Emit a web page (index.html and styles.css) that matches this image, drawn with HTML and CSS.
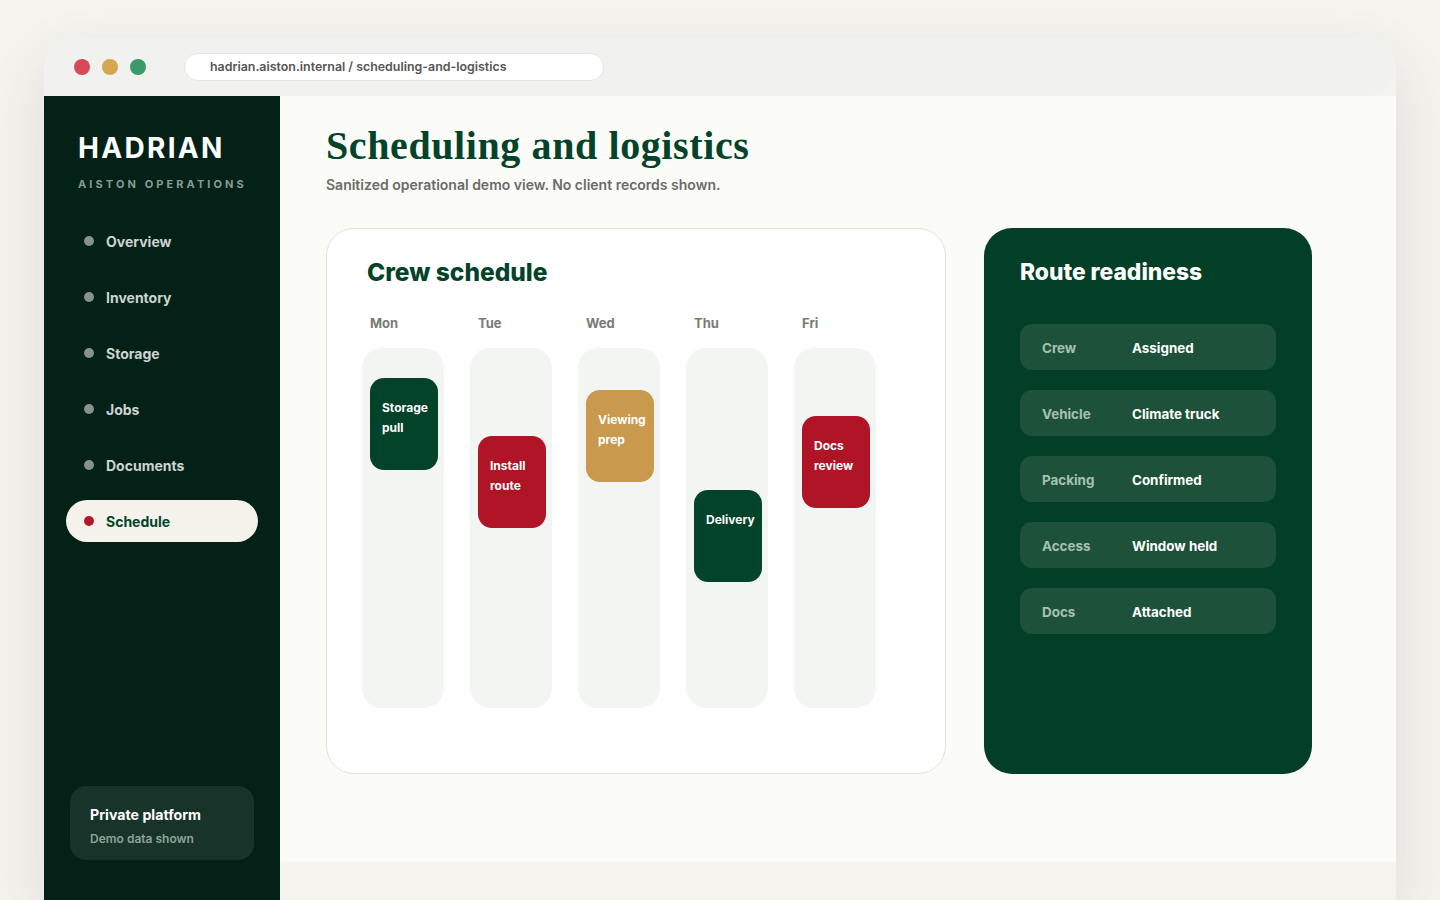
FILE: index.html
```html
<!DOCTYPE html>
<html lang="en">
<head>
  <meta charset="UTF-8">
  <meta name="viewport" content="width=device-width, initial-scale=1.0">
  <title>Hadrian - Scheduling and logistics</title>
  <link rel="stylesheet" href="styles.css">
</head>
<body>
  <div class="window">
    <div class="topbar">
      <span class="light red"></span>
      <span class="light amber"></span>
      <span class="light green"></span>
      <div class="url">hadrian.aiston.internal / scheduling-and-logistics</div>
    </div>

    <div class="frame">
      <aside class="sidebar">
        <div class="brand">HADRIAN</div>
        <div class="brand-sub">AISTON OPERATIONS</div>

        <ul class="nav">
          <li><span class="dot"></span>Overview</li>
          <li><span class="dot"></span>Inventory</li>
          <li><span class="dot"></span>Storage</li>
          <li><span class="dot"></span>Jobs</li>
          <li><span class="dot"></span>Documents</li>
          <li class="active"><span class="dot"></span>Schedule</li>
        </ul>

        <div class="note">
          <div class="note-title">Private platform</div>
          <div class="note-sub">Demo data shown</div>
        </div>
      </aside>

      <main class="main">
        <h1>Scheduling and logistics</h1>
        <p class="lead">Sanitized operational demo view. No client records shown.</p>

        <div class="cards">
          <section class="crew">
            <h2>Crew schedule</h2>
            <div class="week">
              <div class="day">
                <div class="day-name">Mon</div>
                <div class="lane">
                  <div class="event green" style="margin-top: 30px">Storage pull</div>
                </div>
              </div>
              <div class="day">
                <div class="day-name">Tue</div>
                <div class="lane">
                  <div class="event red" style="margin-top: 88px">Install route</div>
                </div>
              </div>
              <div class="day">
                <div class="day-name">Wed</div>
                <div class="lane">
                  <div class="event gold" style="margin-top: 42px">Viewing prep</div>
                </div>
              </div>
              <div class="day">
                <div class="day-name">Thu</div>
                <div class="lane">
                  <div class="event green" style="margin-top: 142px">Delivery</div>
                </div>
              </div>
              <div class="day">
                <div class="day-name">Fri</div>
                <div class="lane">
                  <div class="event red" style="margin-top: 68px">Docs review</div>
                </div>
              </div>
            </div>
          </section>

          <section class="route">
            <h2>Route readiness</h2>
            <div class="checks">
              <div class="check"><span class="check-label">Crew</span><span class="check-value">Assigned</span></div>
              <div class="check"><span class="check-label">Vehicle</span><span class="check-value">Climate truck</span></div>
              <div class="check"><span class="check-label">Packing</span><span class="check-value">Confirmed</span></div>
              <div class="check"><span class="check-label">Access</span><span class="check-value">Window held</span></div>
              <div class="check"><span class="check-label">Docs</span><span class="check-value">Attached</span></div>
            </div>
          </section>
        </div>
      </main>
    </div>
  </div>
</body>
</html>
```

FILE: styles.css
```css
* {
  box-sizing: border-box;
}
body {
  margin: 0;
  background-color: #f4f3ee;
  font-family: Inter, "Noto Sans", sans-serif;
  overflow: hidden;
  height: 900px;
}
.window {
  margin: 38px 0 0 44px;
  width: 1352px;
  border-radius: 28px 28px 0 0;
  box-shadow: 0 24px 60px rgba(60, 60, 40, 0.12);
}
.topbar {
  height: 58px;
  background-color: #f1f1ef;
  border-radius: 28px 28px 28px 0;
  display: flex;
  align-items: center;
  padding-left: 30px;
  gap: 12px;
}
.light {
  width: 16px;
  height: 16px;
  border-radius: 50%;
}
.light.red { background-color: #d94a59; }
.light.amber { background-color: #d5a550; }
.light.green { background-color: #3b9a69; }
.url {
  margin-left: 26px;
  width: 420px;
  height: 28px;
  background-color: #fff;
  border: 1px solid #e6e6e1;
  border-radius: 14px;
  padding-left: 25px;
  font-size: 12.4px;
  font-weight: 600;
  color: #555;
  line-height: 26px;
}
.frame {
  display: flex;
  align-items: flex-start;
}

/* sidebar */
.sidebar {
  width: 236px;
  height: 804px;
  background-color: #032117;
  display: flex;
  flex-direction: column;
  padding-top: 35px;
}
.brand {
  padding-left: 34px;
  font-size: 28px;
  font-weight: 700;
  letter-spacing: 2.3px;
  color: #fff;
  line-height: 34px;
}
.brand-sub {
  padding-left: 34px;
  margin-top: 11px;
  font-size: 11px;
  font-weight: 700;
  letter-spacing: 3.1px;
  color: #8a9b93;
  line-height: 16px;
}
.nav {
  list-style: none;
  margin: 28px 0 0 22px;
  padding: 0;
  display: flex;
  flex-direction: column;
  gap: 14px;
}
.nav li {
  width: 192px;
  height: 42px;
  border-radius: 21px;
  display: flex;
  align-items: center;
  padding-left: 18px;
  gap: 12px;
  font-size: 14px;
  font-weight: 700;
  color: #cdd5d1;
}
.dot {
  width: 10px;
  height: 10px;
  border-radius: 50%;
  background-color: #87928d;
}
.nav li.active {
  background-color: #f4f2ea;
  color: #03432a;
}
.nav li.active .dot {
  background-color: #b5162a;
}
.note {
  margin: auto 26px 40px 26px;
  height: 74px;
  border-radius: 16px;
  background-color: #18332a;
  padding: 20px 20px 0;
}
.note-title {
  font-size: 14.2px;
  font-weight: 700;
  color: #fff;
  line-height: 18px;
}
.note-sub {
  margin-top: 7px;
  font-size: 12px;
  font-weight: 600;
  color: #8ea398;
  line-height: 15px;
}

/* main */
.main {
  flex: 1;
  height: 766px;
  background-color: #fbfbf7;
  padding: 26px 46px 0;
}
h1 {
  margin: 0;
  font-family: "Liberation Serif", "DejaVu Serif", serif;
  font-size: 40px;
  font-weight: 700;
  letter-spacing: 0.6px;
  color: #03432a;
  line-height: 48px;
}
.lead {
  margin: 6px 0 0;
  font-size: 14px;
  font-weight: 600;
  color: #6b6b68;
  line-height: 18px;
}
.cards {
  display: flex;
  gap: 38px;
  margin-top: 34px;
}
.crew {
  width: 620px;
  height: 546px;
  background-color: #fff;
  border: 1px solid #e1e1dc;
  border-radius: 28px;
  padding: 27px 0 0 35px;
}
h2 {
  margin: 0;
  font-size: 24.5px;
  font-weight: 800;
  line-height: 32px;
}
.crew h2 {
  margin-left: 5px;
  color: #03432a;
}
.week {
  display: flex;
  gap: 26px;
  margin-top: 26px;
}
.day {
  width: 82px;
}
.day-name {
  padding-left: 8px;
  font-size: 13px;
  font-weight: 700;
  color: #777a77;
  line-height: 18px;
}
.lane {
  margin-top: 16px;
  height: 360px;
  background-color: #f3f5f2;
  border-radius: 20px;
  padding: 0 0 0 8px;
  overflow: hidden;
}
.event {
  width: 68px;
  height: 92px;
  border-radius: 14px;
  padding: 20px 8px 0 12px;
  font-size: 12px;
  font-weight: 700;
  line-height: 20px;
  color: #fff;
}
.event.green { background-color: #03432a; }
.event.red { background-color: #b01427; }
.event.gold { background-color: #c99a4e; }

.route {
  width: 328px;
  height: 546px;
  background-color: #033f27;
  border-radius: 28px;
  padding: 28px 36px 0;
}
.route h2 {
  color: #fff;
  font-size: 22.8px;
}
.checks {
  margin-top: 36px;
  display: flex;
  flex-direction: column;
  gap: 20px;
}
.check {
  height: 46px;
  border-radius: 12px;
  background-color: #1d5139;
  display: flex;
  align-items: center;
  padding-left: 22px;
  padding-top: 1px;
  font-size: 13.4px;
  font-weight: 700;
}
.check-label {
  width: 90px;
  color: #a6c1b1;
}
.check-value {
  color: #fff;
}
```
